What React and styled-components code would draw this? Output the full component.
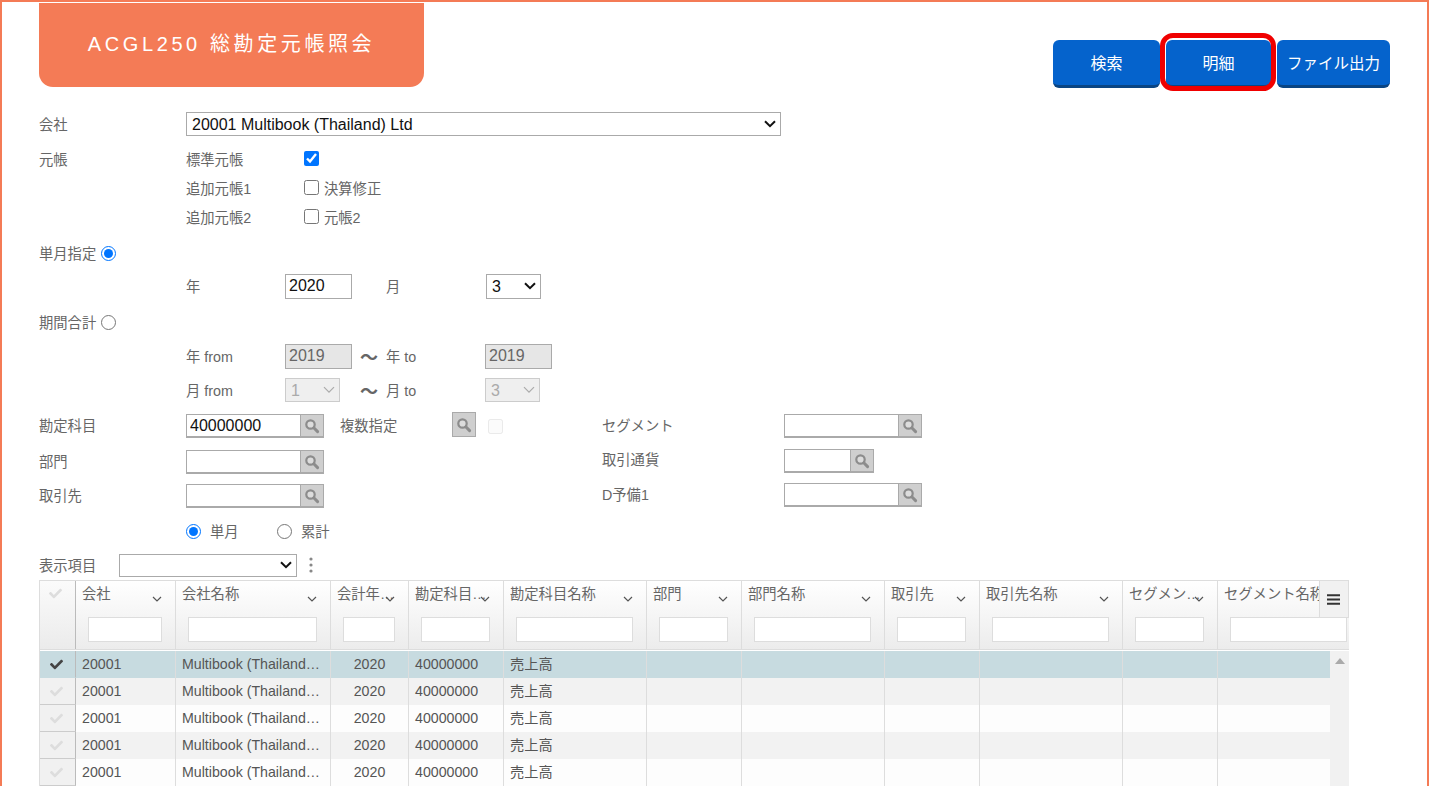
import React from "react";
import styled, { createGlobalStyle } from "styled-components";
import { FaCheck } from "react-icons/fa";

const FONT = `"Liberation Sans", "Noto Sans CJK JP", sans-serif`;

const chevron = (color, width) =>
  `url("data:image/svg+xml,${encodeURIComponent(
    `<svg xmlns='http://www.w3.org/2000/svg' width='12' height='8' viewBox='0 0 12 8'><path d='M1 1.2l5 5 5-5' fill='none' stroke='${color}' stroke-width='${width}'/></svg>`
  )}")`;

const Global = createGlobalStyle`
  html, body { margin: 0; padding: 0; height: 100%; overflow: hidden; background: #fff; }
  body { font-family: ${FONT}; }
  * { box-sizing: border-box; }
`;

const Page = styled.div`
  width: 1429px;
  height: 786px;
  border: 2px solid #f47b56;
  border-bottom: 0;
  padding: 1px 37px 0;
  overflow: hidden;
  background: #fff;
`;
const Header = styled.header`
  display: flex;
  justify-content: space-between;
  align-items: flex-start;
  height: 84px;
`;
const TitleTab = styled.h1`
  margin: 0;
  width: 385px;
  height: 84px;
  padding-bottom: 5px;
  display: flex;
  align-items: center;
  justify-content: center;
  background: #f47b56;
  border-radius: 0 0 14px 14px;
  color: #fff;
  font: 400 20px ${FONT};
  letter-spacing: 3.6px;
`;
const Actions = styled.div`
  display: flex;
  gap: 6px;
  margin-top: 37px;
`;
const ActionWrap = styled.div`
  position: relative;
`;
const ActionButton = styled.button`
  display: block;
  width: ${(p) => p.$w}px;
  height: 48px;
  padding: 0 0 2px;
  border: 0;
  border-bottom: 3px solid #0a4583;
  border-radius: 6px;
  background: #0563cc;
  color: #fff;
  font: 400 ${(p) => p.$fs || 16}px ${FONT};
`;
const Highlight = styled.span`
  position: absolute;
  top: -7px;
  bottom: -3px;
  left: -6px;
  right: -5px;
  border: 5px solid #f00000;
  border-radius: 13px;
  pointer-events: none;
`;

const Form = styled.form`
  margin: 0;
  display: block;
`;
const Row = styled.div`
  display: flex;
  align-items: center;
  height: 24px;
  margin-top: ${(p) => p.$mt}px;
`;
const Label = styled.span`
  flex: none;
  width: ${(p) => (p.$w ? `${p.$w}px` : "auto")};
  white-space: nowrap;
  color: #666;
  font-size: 14.3px;
  margin-bottom: ${(p) => p.$lift ?? 2}px;
`;
const Spacer = styled.div`
  flex: none;
  width: ${(p) => p.$w}px;
`;
const Tilde = styled.span`
  flex: none;
  width: 34px;
  text-align: center;
  color: #666;
  font-size: 18px;
  font-weight: 700;
  line-height: 1;
  padding-top: 3px;
`;
const TextInput = styled.input`
  flex: none;
  width: ${(p) => p.$w}px;
  height: 25px;
  padding: 0 3px;
  border: 1px solid #aaa;
  border-radius: 0;
  background: #fff;
  color: #111;
  font: 400 16px ${FONT};
  margin-right: ${(p) => p.$mr || 0}px;
  &:disabled {
    background: #e6e6e6;
    color: #666;
  }
`;
const Select = styled.select`
  flex: none;
  appearance: none;
  width: ${(p) => p.$w}px;
  height: ${(p) => p.$h || 24}px;
  padding: 0 18px 0 5px;
  border: 1px solid #aaa;
  border-radius: 0;
  background: #fff ${chevron("#111", 2)} no-repeat right 4px center;
  color: #111;
  font: 400 16px ${FONT};
  &:disabled {
    background: #efefef ${chevron("#aaa", 1.2)} no-repeat right 4px center;
    border-color: #ccc;
    color: #aaa;
    opacity: 1;
  }
`;
const Check = styled.input.attrs({ type: "checkbox" })`
  flex: none;
  width: 15px;
  height: 15px;
  margin: 0 5px 2px 0;
  &:disabled { opacity: 0.45; margin-bottom: 0; }
`;
const Radio = styled.input.attrs({ type: "radio" })`
  flex: none;
  width: 15px;
  height: 15px;
  margin: 0 ${(p) => p.$mr ?? 0}px 0 0;
`;
const Combo = styled.div`
  flex: none;
  display: flex;
  width: ${(p) => p.$w}px;
  height: 24px;
  border: 1px solid #aaa;
  border-bottom-width: 2px;
  background: #fff;
  margin-bottom: ${(p) => p.$lift || 0}px;
`;
const ComboInput = styled.input`
  flex: 1;
  min-width: 0;
  border: 0;
  padding: 0 3px;
  background: transparent;
  color: #111;
  font: 400 16px ${FONT};
`;
const SearchButton = styled.button`
  flex: none;
  width: 23px;
  padding: 0;
  border: 0;
  border-left: 1px solid #aaa;
  display: flex;
  align-items: center;
  justify-content: center;
  background: #cfcfcf;
`;
const SoloSearchButton = styled(SearchButton)`
  width: 24px;
  height: 25px;
  margin: 0 12px 3px 0;
  border: 1px solid #aaa;
`;
const Kebab = styled.svg`
  flex: none;
  margin-left: 12px;
`;

const Table = styled.div`
  position: relative;
  width: 1310px;
  margin-top: 3px;
  border-top: 1px solid #ddd;
  border-left: 1px solid #ddd;
  overflow: hidden;
  font-size: 14.2px;
  color: #555;
`;
const HeadRow = styled.div`
  display: flex;
  height: 69px;
  background: linear-gradient(#ffffff, #ececec);
  border-bottom: 1px solid #ddd;
`;
const HeadCell = styled.div`
  flex: none;
  width: ${(p) => p.$w}px;
  border-right: 1px solid #ddd;
  padding: 5px 0 0 6px;
`;
const HeadTop = styled.div`
  display: flex;
  align-items: flex-start;
  height: 31px;
  padding-right: 13px;
`;
const HeadText = styled.span`
  flex: 1;
  min-width: 0;
  overflow: hidden;
  white-space: nowrap;
  text-overflow: ellipsis;
  color: #666;
  font-size: 14.3px;
  line-height: 17px;
`;
const SortMark = styled.svg`
  flex: none;
  margin: 10px 0 0 -10px;
`;
const FilterInput = styled.input`
  display: block;
  margin-left: 6px;
  width: calc(100% - 19px);
  height: 25px;
  border: 1px solid #ddd;
  background: #fff;
`;
const CheckHead = styled.div`
  flex: none;
  width: 36px;
  border-right: 1px solid #bbb;
  background: linear-gradient(#fbfbfb, #ebebeb);
  padding: 6px 0 0 9px;
  color: #ddd;
`;
const ColumnMenu = styled.button`
  position: absolute;
  top: 0;
  right: 0;
  width: 30px;
  height: 37px;
  padding: 0 2px 0 0;
  border: 1px solid #ddd;
  border-top: 0;
  background: #f1f1f1;
  display: flex;
  align-items: center;
  justify-content: center;
`;
const Body = styled.div`
  display: flex;
  margin-top: 1px;
`;
const Rows = styled.div`
  flex: none;
  width: 1290px;
  overflow: hidden;
`;
const BodyRow = styled.div`
  display: flex;
  width: 1500px;
  height: 27px;
  background: ${(p) => (p.$selected ? "#c7dbe0" : p.$alt ? "#f2f2f2" : "#fdfdfd")};
`;
const CheckCell = styled.div`
  flex: none;
  width: 36px;
  padding-right: 2px;
  display: flex;
  align-items: center;
  justify-content: center;
  border-right: 1px solid #bbb;
  border-bottom: 1px solid ${(p) => (p.$selected ? "#c7dbe0" : "#ccc")};
  background: ${(p) => (p.$selected ? "#c7dbe0" : "#f1f1f1")};
  color: ${(p) => (p.$selected ? "#444" : "#ddd")};
`;
const BodyCell = styled.div`
  flex: none;
  width: ${(p) => p.$w}px;
  padding: 0 6px;
  border-right: 1px solid #ddd;
  line-height: 26px;
  white-space: nowrap;
  overflow: hidden;
  text-overflow: ellipsis;
  text-align: ${(p) => (p.$center ? "center" : "left")};
  color: #555;
`;
const Scrollbar = styled.div`
  flex: 1;
  background: #f1f1f1;
  height: 140px;
  display: flex;
  justify-content: center;
  padding-top: 7px;
`;
const ScrollArrow = styled.span`
  width: 0;
  height: 0;
  border-left: 5px solid transparent;
  border-right: 5px solid transparent;
  border-bottom: 6px solid #aaa;
`;

const SearchIcon = () => (
  <svg width="16" height="16" viewBox="0 0 16 16" aria-hidden="true">
    <circle cx="6.5" cy="6.5" r="4.2" fill="#dcdcdc" stroke="#8c8c8c" strokeWidth="2.2" />
    <path d="M10 10l3.6 3.6" stroke="#8c8c8c" strokeWidth="3" strokeLinecap="round" />
  </svg>
);
const Lookup = ({ w, value, lift }) => (
  <Combo $w={w} $lift={lift}>
    <ComboInput defaultValue={value} />
    <SearchButton type="button"><SearchIcon /></SearchButton>
  </Combo>
);
const Sort = () => (
  <SortMark width="10" height="6" viewBox="0 0 10 6" aria-hidden="true">
    <path d="M1 1l4 4 4-4" fill="none" stroke="#555" strokeWidth="1.2" />
  </SortMark>
);

const COLUMNS = [
  { w: 100, t: "会社" },
  { w: 155, t: "会社名称" },
  { w: 78, t: "会計年度コード" },
  { w: 95, t: "勘定科目コード" },
  { w: 143, t: "勘定科目名称" },
  { w: 95, t: "部門" },
  { w: 143, t: "部門名称" },
  { w: 95, t: "取引先" },
  { w: 143, t: "取引先名称" },
  { w: 95, t: "セグメントコード" },
  { w: 143, t: "セグメント名称", noSort: true },
];

const Grid = () => (
  <Table>
    <HeadRow>
      <CheckHead><FaCheck size={13} /></CheckHead>
      {COLUMNS.map((c) => (
        <HeadCell key={c.t} $w={c.w}>
          <HeadTop>
            <HeadText>{c.t}</HeadText>
            {!c.noSort && <Sort />}
          </HeadTop>
          <FilterInput />
        </HeadCell>
      ))}
    </HeadRow>
    <ColumnMenu type="button" aria-label="列メニュー">
      <svg width="13" height="11" viewBox="0 0 13 11" aria-hidden="true">
        <path d="M0 1.2h13M0 5.5h13M0 9.8h13" stroke="#333" strokeWidth="2" />
      </svg>
    </ColumnMenu>
    <Body>
      <Rows>
        {[0, 1, 2, 3, 4].map((i) => (
          <BodyRow key={i} $selected={i === 0} $alt={i % 2 === 1}>
            <CheckCell $selected={i === 0}><FaCheck size={13} /></CheckCell>
            {COLUMNS.map((c, j) => (
              <BodyCell key={c.t} $w={c.w} $center={j === 2}>
                {["20001", "Multibook (Thailand) Ltd", "2020", "40000000", "売上高"][j] || ""}
              </BodyCell>
            ))}
          </BodyRow>
        ))}
      </Rows>
      <Scrollbar><ScrollArrow /></Scrollbar>
    </Body>
  </Table>
);

export default function App() {
  return (
    <Page>
      <Global />
      <Header>
        <TitleTab>ACGL250 総勘定元帳照会</TitleTab>
        <Actions>
          <ActionWrap><ActionButton $w={107}>検索</ActionButton></ActionWrap>
          <ActionWrap>
            <ActionButton $w={105}>明細</ActionButton>
            <Highlight />
          </ActionWrap>
          <ActionWrap><ActionButton $w={113} $fs={15.5}>ファイル出力</ActionButton></ActionWrap>
        </Actions>
      </Header>
      <Form onSubmit={(e) => e.preventDefault()}>
        <Row $mt={25}>
          <Label $w={147}>会社</Label>
          <Select $w={595} defaultValue="a">
            <option value="a">20001 Multibook (Thailand) Ltd</option>
          </Select>
        </Row>
        <Row $mt={11}>
          <Label $w={147}>元帳</Label>
          <Label $w={118}>標準元帳</Label>
          <Check defaultChecked />
        </Row>
        <Row $mt={5}>
          <Spacer $w={147} />
          <Label $w={118}>追加元帳1</Label>
          <Check />
          <Label>決算修正</Label>
        </Row>
        <Row $mt={5}>
          <Spacer $w={147} />
          <Label $w={118}>追加元帳2</Label>
          <Check />
          <Label>元帳2</Label>
        </Row>
        <Row $mt={12}>
          <Label $w={62}>単月指定</Label>
          <Radio name="mode" defaultChecked />
        </Row>
        <Row $mt={9}>
          <Spacer $w={147} />
          <Label $w={99}>年</Label>
          <TextInput $w={67} $mr={34} defaultValue="2020" />
          <Label $w={100}>月</Label>
          <Select $w={55} $h={25} defaultValue="3"><option>3</option></Select>
        </Row>
        <Row $mt={12}>
          <Label $w={62}>期間合計</Label>
          <Radio name="mode" />
        </Row>
        <Row $mt={10}>
          <Spacer $w={147} />
          <Label $w={99}>年 from</Label>
          <TextInput $w={67} disabled defaultValue="2019" />
          <Tilde>～</Tilde>
          <Label $w={99}>年 to</Label>
          <TextInput $w={67} disabled defaultValue="2019" />
        </Row>
        <Row $mt={10}>
          <Spacer $w={147} />
          <Label $w={99}>月 from</Label>
          <Select $w={55} disabled defaultValue="1"><option>1</option></Select>
          <Spacer $w={12} />
          <Tilde>～</Tilde>
          <Label $w={99}>月 to</Label>
          <Select $w={55} disabled defaultValue="3"><option>3</option></Select>
        </Row>
        <Row $mt={12}>
          <Label $w={147} $lift={4}>勘定科目</Label>
          <Lookup w={138} value="40000000" />
          <Spacer $w={16} />
          <Label $w={112} $lift={4}>複数指定</Label>
          <SoloSearchButton type="button"><SearchIcon /></SoloSearchButton>
          <Check disabled />
          <Spacer $w={94} />
          <Label $w={182} $lift={4}>セグメント</Label>
          <Lookup w={138} />
        </Row>
        <Row $mt={12}>
          <Label $w={147} $lift={4}>部門</Label>
          <Lookup w={138} />
          <Spacer $w={278} />
          <Label $w={182} $lift={8}>取引通貨</Label>
          <Lookup w={90} lift={2} />
        </Row>
        <Row $mt={10}>
          <Label $w={147} $lift={4}>取引先</Label>
          <Lookup w={138} />
          <Spacer $w={278} />
          <Label $w={182} $lift={6}>D予備1</Label>
          <Lookup w={138} lift={2} />
        </Row>
        <Row $mt={11}>
          <Spacer $w={147} />
          <Radio name="span" defaultChecked $mr={9} />
          <Label $w={67}>単月</Label>
          <Radio name="span" $mr={9} />
          <Label>累計</Label>
        </Row>
        <Row $mt={10}>
          <Label $w={80}>表示項目</Label>
          <Select $w={178} $h={23} />
          <Kebab width="4" height="16" viewBox="0 0 4 16" aria-hidden="true">
            <circle cx="2" cy="2" r="1.6" fill="#888" />
            <circle cx="2" cy="8" r="1.6" fill="#888" />
            <circle cx="2" cy="14" r="1.6" fill="#888" />
          </Kebab>
        </Row>
      </Form>
      <Grid />
    </Page>
  );
}
